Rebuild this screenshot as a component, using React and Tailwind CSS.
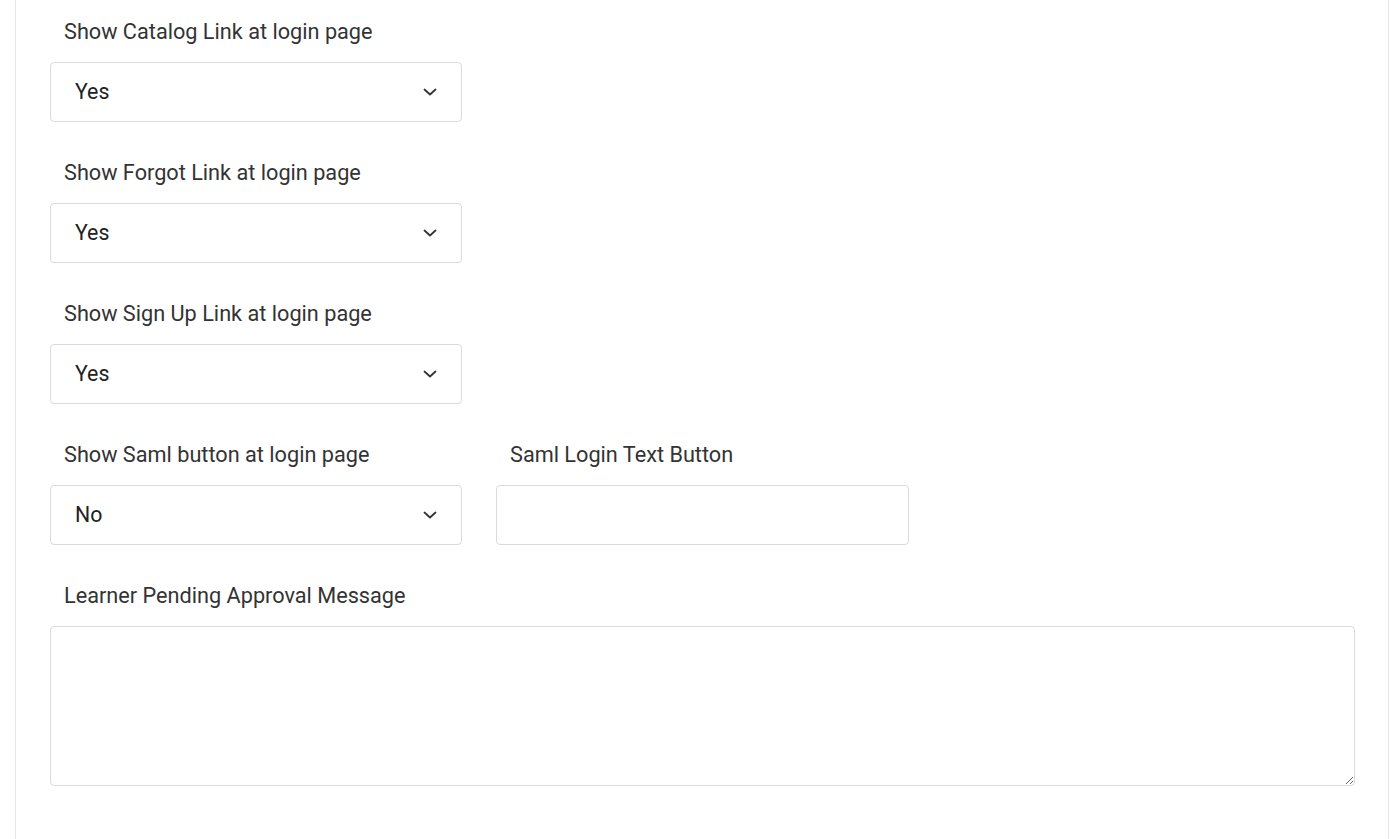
import React from 'react'

function Chevron() {
  return (
    <svg width="14" height="8" viewBox="0 0 14 8" fill="none" className="text-[#333]">
      <path d="M1.5 1.5 L7 6.5 L12.5 1.5" stroke="currentColor" strokeWidth="1.8" strokeLinecap="round" strokeLinejoin="round" />
    </svg>
  )
}

function SelectField({ label, value }) {
  return (
    <div className="w-[412px] flex flex-col">
      <label className="pl-[14px] h-6 leading-[26px] text-[21.7px] text-[#333] whitespace-nowrap">{label}</label>
      <div className="mt-[19px] h-[60px] border border-[#dadada] rounded-[4px] bg-white flex items-center justify-between pl-[24px] pr-[24px]">
        <span className="text-[21.3px] text-[#222]">{value}</span>
        <Chevron />
      </div>
    </div>
  )
}

function TextField({ label }) {
  return (
    <div className="w-[413px] flex flex-col">
      <label className="pl-[14px] h-6 leading-[26px] text-[21.7px] text-[#333] whitespace-nowrap">{label}</label>
      <input type="text" className="mt-[19px] h-[60px] border border-[#dadada] rounded-[4px] bg-white px-[24px] text-[20px] outline-none" />
    </div>
  )
}

export default function App() {
  const rows = [
    { label: 'Show Catalog Link at login page', value: 'Yes' },
    { label: 'Show Forgot Link at login page', value: 'Yes' },
    { label: 'Show Sign Up Link at login page', value: 'Yes' },
  ]

  return (
    <div className="min-h-screen bg-white pl-[15px]" style={{ fontFamily: 'Roboto, "Liberation Sans", sans-serif' }}>
      <div className="w-[1374px] min-h-[839px] border-x border-[#e6e6e6] bg-white pt-[19px] pl-[34px] pr-[33px]">
        <div className="flex flex-col gap-[38px]">
          {rows.map((r) => (
            <SelectField key={r.label} label={r.label} value={r.value} />
          ))}
          <div className="flex gap-[34px]">
            <SelectField label="Show Saml button at login page" value="No" />
            <TextField label="Saml Login Text Button" />
          </div>
          <div className="flex flex-col">
            <label className="pl-[14px] h-6 leading-[26px] text-[21.7px] text-[#333]">Learner Pending Approval Message</label>
            <textarea className="mt-[19px] h-[160px] w-full border border-[#dadada] rounded-[4px] bg-white p-3 text-[20px] outline-none" />
          </div>
        </div>
      </div>
    </div>
  )
}
